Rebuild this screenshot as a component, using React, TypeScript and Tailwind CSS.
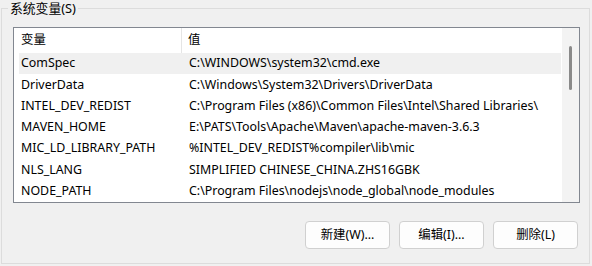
import React from "react";

const rows: [string, string][] = [
  ["ComSpec", "C:\\WINDOWS\\system32\\cmd.exe"],
  ["DriverData", "C:\\Windows\\System32\\Drivers\\DriverData"],
  ["INTEL_DEV_REDIST", "C:\\Program Files (x86)\\Common Files\\Intel\\Shared Libraries\\"],
  ["MAVEN_HOME", "E:\\PATS\\Tools\\Apache\\Maven\\apache-maven-3.6.3"],
  ["MIC_LD_LIBRARY_PATH", "%INTEL_DEV_REDIST%compiler\\lib\\mic"],
  ["NLS_LANG", "SIMPLIFIED CHINESE_CHINA.ZHS16GBK"],
  ["NODE_PATH", "C:\\Program Files\\nodejs\\node_global\\node_modules"],
];

const font = { fontFamily: '"Noto Sans", "Noto Sans CJK SC", sans-serif' };

export default function App() {
  return (
    <div
      className="w-[592px] h-[266px] bg-[#f0f0f0] text-[12.4px] text-black overflow-hidden"
      style={font}
    >
      <div className="pt-[8px] pl-[1px]">
        <div className="relative w-[589px] h-[256px] border border-[#dcdcdc] pl-[11px] pt-[18px]">
          <div className="absolute left-[6px] top-[-9px] px-[2px] bg-[#f0f0f0] leading-[16px] text-[12.8px]">
            系统变量(S)
          </div>
          <div className="flex w-[567px] h-[176px] border border-[#828790] bg-white">
            <div className="flex-1 flex flex-col overflow-hidden">
              <div className="flex h-[25px] items-center">
                <div className="w-[168px] h-full flex items-center pl-[7px] border-r border-[#e5e5e5]">
                  变量
                </div>
                <div className="pl-[6px]">值</div>
              </div>
              {rows.map(([k, v], i) => (
                <div
                  key={k}
                  className={
                    "flex items-center h-[21.3px] shrink-0 ml-[5px] mr-[1px] whitespace-nowrap " +
                    (i === 0 ? "bg-[#f0f0f0]" : "")
                  }
                >
                  <div className="w-[170px] pl-[2px]">{k}</div>
                  <div>{v}</div>
                </div>
              ))}
            </div>
            <div className="w-[17px] h-full bg-[#f3f3f3] flex justify-center pt-[18px]">
              <div className="w-[3px] h-[44px] bg-[#8a8a8a] rounded-full" />
            </div>
          </div>
          <div className="flex justify-end gap-[9px] mt-[18px] pr-[11px]">
            {["新建(W)...", "编辑(I)...", "删除(L)"].map((t) => (
              <button
                key={t}
                className="w-[85px] h-[28px] bg-[#fdfdfd] border border-[#d0d0d0] rounded-[4px] text-[12.4px]"
                style={font}
              >
                {t}
              </button>
            ))}
          </div>
        </div>
      </div>
    </div>
  );
}
